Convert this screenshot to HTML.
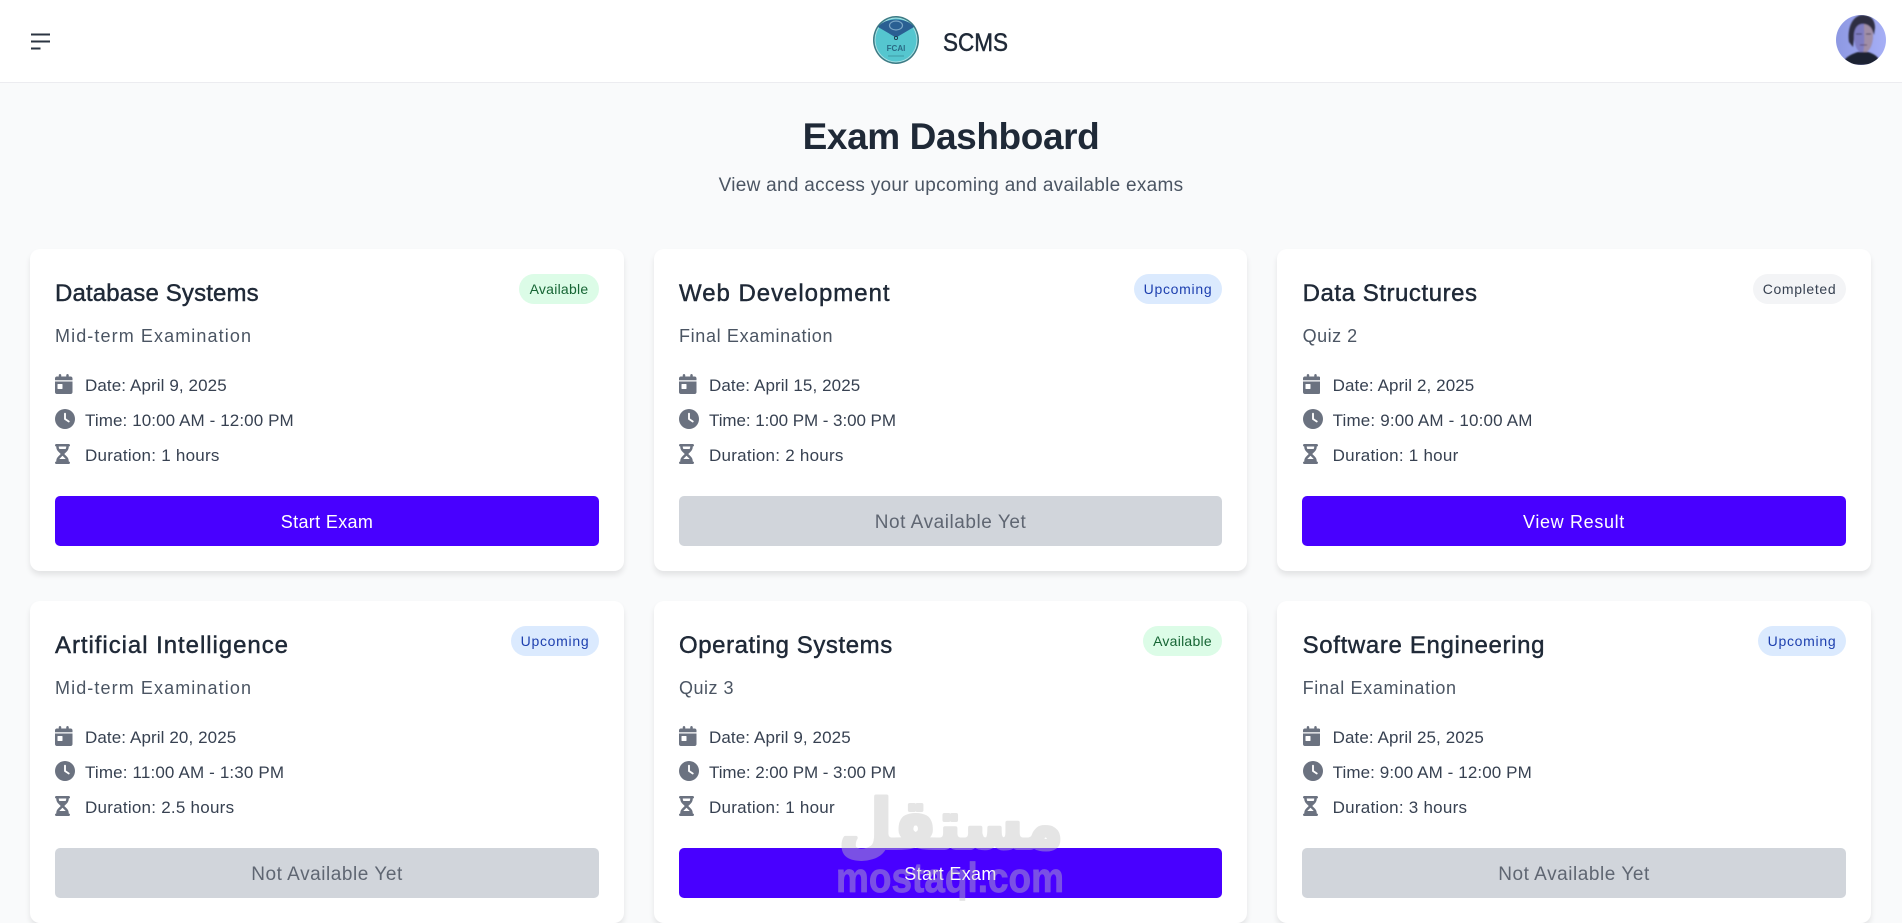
<!DOCTYPE html>
<html lang="en">
<head>
<meta charset="utf-8">
<title>Exam Dashboard</title>
<style>
*{box-sizing:border-box;margin:0;padding:0}
html,body{width:1902px;height:917px;overflow:hidden;background:#f9fafb;font-family:"Liberation Sans",sans-serif}
header{position:absolute;left:0;top:0;width:1902px;height:83px;background:#fff;border-bottom:1px solid #ececf0}
.menu{position:absolute;left:31px;top:32.500px}
.logo{position:absolute;left:873px;top:16px}
.brand{position:absolute;left:943px;top:26px;font-size:25px;line-height:34px;color:#1f2937;-webkit-text-stroke:.5px #1f2937;transform:scaleX(.9);transform-origin:0 50%}
.avatar{position:absolute;left:1836px;top:15px}
h1{position:absolute;left:0;width:1902px;top:113px;text-align:center;font-size:37px;line-height:48px;color:#1f2937;letter-spacing:-.4px}
.lead{position:absolute;left:0;width:1902px;top:174px;text-align:center;font-size:19px;line-height:24px;color:#4b5563;letter-spacing:.29px}
.card{position:absolute;width:594px;height:322px;background:#fff;border-radius:10px;box-shadow:0 4px 6px rgba(0,0,0,.09)}
.mid{width:593px}
.card h3{position:absolute;left:25px;top:30px;font-size:24px;line-height:30px;font-weight:400;color:#1f2937;-webkit-text-stroke:.45px #1f2937;white-space:nowrap}
.sub{position:absolute;left:25px;top:75px;font-size:18px;line-height:24px;color:#4b5563;white-space:nowrap}
.badge{position:absolute;right:25px;top:25px;height:30px;border-radius:15px;font-size:14px;line-height:31px;text-align:center;white-space:nowrap}
.av{background:#dcfce7;color:#166534;width:80px;letter-spacing:.25px}
.mid .av{width:79px}
.up{background:#dbeafe;color:#1e40af;width:88px;letter-spacing:.7px}
.co{background:#f3f4f6;color:#374151;width:93px;letter-spacing:.65px}
.row{position:absolute;left:25px;height:24px;font-size:17px;line-height:24px;color:#374151;white-space:nowrap;padding-left:30px;letter-spacing:.1px}
.row svg{position:absolute;left:0;top:0;height:20px;fill:#6b7280}
.r1{top:125px}.r2{top:160px}.r3{top:195px;letter-spacing:.25px}
.r2 svg{width:20px;top:0}.r1 svg{width:17.500px;top:0}.r3 svg{width:15px;top:-.500px}
.btn{position:absolute;left:25px;top:247px;width:544px;height:50px;border-radius:5px;font-size:18px;line-height:52px;text-align:center}
.mid .btn{width:543px}
.on{background:#4800ff;color:#fff;letter-spacing:.35px}
.off{background:#d1d5db;color:#5f6672;font-size:19px;letter-spacing:.55px;line-height:53px}
.c3 h3,.c3 .sub,.c3 .row{left:25.600px}
.wm{position:absolute;left:820px;top:780px;pointer-events:none}
</style>
</head>
<body>
<svg width="0" height="0" style="position:absolute">
  <symbol id="cal" viewBox="0 0 448 512"><path d="M128 0c17.700 0 32 14.300 32 32V64H288V32c0-17.700 14.300-32 32-32s32 14.300 32 32V64h48c26.500 0 48 21.500 48 48v48H0V112C0 85.500 21.500 64 48 64H96V32c0-17.700 14.300-32 32-32zM0 192H448V464c0 26.500-21.500 48-48 48H48c-26.500 0-48-21.500-48-48V192zm80 64c-8.800 0-16 7.200-16 16v96c0 8.800 7.200 16 16 16h96c8.800 0 16-7.200 16-16V272c0-8.800-7.200-16-16-16H80z"/></symbol>
  <symbol id="clk" viewBox="0 0 512 512"><path d="M256 0a256 256 0 1 1 0 512A256 256 0 1 1 256 0zM232 120V256c0 8 4 15.500 10.700 20l96 64c11 7.400 25.900 4.400 33.300-6.700s4.400-25.900-6.700-33.300L280 243.200V120c0-13.300-10.700-24-24-24s-24 10.700-24 24z"/></symbol>
  <symbol id="hrg" viewBox="0 0 384 512"><path d="M32 0C14.300 0 0 14.300 0 32S14.300 64 32 64V75c0 42.400 16.900 83.100 46.900 113.100L146.700 256 78.900 323.900C48.900 353.900 32 394.600 32 437v11c-17.700 0-32 14.300-32 32s14.300 32 32 32H64 320h32c17.700 0 32-14.300 32-32s-14.300-32-32-32V437c0-42.400-16.900-83.100-46.900-113.100L237.300 256l67.900-67.900c30-30 46.900-70.700 46.900-113.100V64c17.700 0 32-14.300 32-32s-14.300-32-32-32H320 64 32zM96 75V64H288V75c0 19-5.600 37.400-16 53H112c-10.300-15.600-16-34-16-53zm16 309c3.500-5.300 7.600-10.300 12.100-14.900L192 301.300l67.900 67.900c4.600 4.600 8.600 9.600 12.100 14.900H112z"/></symbol>
</svg>
<header>
  <svg class="menu" width="20" height="18" viewBox="0 0 20 18"><path d="M0 1.500H19M0 8.500H19M0 15.500H9.500" stroke="#2b3442" stroke-width="2" fill="none"/></svg>
  <svg class="logo" width="46" height="48" viewBox="0 0 46 48">
    <ellipse cx="23" cy="24" rx="23" ry="24" fill="#3c7a84"/>
    <ellipse cx="23" cy="24" rx="21.500" ry="22.500" fill="#a8e0e4"/>
    <ellipse cx="23" cy="24" rx="20.500" ry="21.500" fill="#55c6cf"/>
    <path d="M5 11C12 1 34 1 41 11L24 21H22Z" fill="#2a5f92"/>
    <ellipse cx="23" cy="9.500" rx="6.500" ry="4.500" fill="none" stroke="#7aa6c6" stroke-width="1.200"/>
    <circle cx="23" cy="22" r="1.600" fill="none" stroke="#1d3d50" stroke-width=".9"/>
    <text x="23" y="35" font-family="Liberation Sans" font-size="8" font-weight="700" text-anchor="middle" fill="#2a6b85">FCAI</text>
    <path d="M15 40H31" stroke="#3f9aa6" stroke-width="1"/>
  </svg>
  <div class="brand">SCMS</div>
  <svg class="avatar" width="50" height="50" viewBox="0 0 50 50">
    <defs>
      <clipPath id="c"><circle cx="25" cy="25" r="25"/></clipPath>
      <linearGradient id="bg" x1="0" x2="1"><stop offset="0" stop-color="#8d98e2"/><stop offset="1" stop-color="#a6aff6"/></linearGradient>
      <filter id="b"><feGaussianBlur stdDeviation=".9"/></filter>
    </defs>
    <g clip-path="url(#c)">
      <rect width="50" height="50" fill="url(#bg)"/>
      <g filter="url(#b)">
        <path d="M13 27C11 12 17 0 27 0C35 0 39 5 39 13L38 20C36 12 30 9 24 10C20 12 18 17 18 24L17 32Z" fill="#2e2d42"/>
        <path d="M18 21C18 12 23 8 28 9C34 10 37 14 37 20C37 30 33 38 27 38C22 38 18 31 18 21Z" fill="#7f7dc2"/>
        <path d="M28 9C34 10 37 14 37 20C37 30 33 38 27 38C29 30 28 18 28 9Z" fill="#a08ea6"/>
        <path d="M20 19H26M30 19H35" stroke="#3a3858" stroke-width="1.100"/>
        <path d="M24 30H31" stroke="#5c4a6c" stroke-width="1"/>
        <path d="M6 50C8 42 16 39 22 37L32 37C38 39 44 42 45 50Z" fill="#1c2033"/>
      </g>
    </g>
  </svg>
</header>

<h1>Exam Dashboard</h1>
<div class="lead">View and access your upcoming and available exams</div>

<section class="card" style="left:30px;top:249px">
  <h3 style="letter-spacing:.15px">Database Systems</h3><span class="badge av">Available</span>
  <div class="sub" style="letter-spacing:1.100px">Mid-term Examination</div>
  <div class="row r1"><svg><use href="#cal"/></svg>Date: April 9, 2025</div>
  <div class="row r2"><svg><use href="#clk"/></svg>Time: 10:00 AM - 12:00 PM</div>
  <div class="row r3"><svg><use href="#hrg"/></svg>Duration: 1 hours</div>
  <div class="btn on">Start Exam</div>
</section>

<section class="card mid" style="left:654px;top:249px">
  <h3 style="letter-spacing:.97px">Web Development</h3><span class="badge up">Upcoming</span>
  <div class="sub" style="letter-spacing:.65px">Final Examination</div>
  <div class="row r1"><svg><use href="#cal"/></svg>Date: April 15, 2025</div>
  <div class="row r2" style="letter-spacing:-.06px"><svg><use href="#clk"/></svg>Time: 1:00 PM - 3:00 PM</div>
  <div class="row r3"><svg><use href="#hrg"/></svg>Duration: 2 hours</div>
  <div class="btn off">Not Available Yet</div>
</section>

<section class="card c3" style="left:1277px;top:249px">
  <h3 style="letter-spacing:.55px">Data Structures</h3><span class="badge co">Completed</span>
  <div class="sub" style="letter-spacing:.5px">Quiz 2</div>
  <div class="row r1"><svg><use href="#cal"/></svg>Date: April 2, 2025</div>
  <div class="row r2" style="letter-spacing:.17px"><svg><use href="#clk"/></svg>Time: 9:00 AM - 10:00 AM</div>
  <div class="row r3"><svg><use href="#hrg"/></svg>Duration: 1 hour</div>
  <div class="btn on" style="letter-spacing:.66px">View Result</div>
</section>

<section class="card" style="left:30px;top:601px">
  <h3 style="letter-spacing:.95px">Artificial Intelligence</h3><span class="badge up">Upcoming</span>
  <div class="sub" style="letter-spacing:1.100px">Mid-term Examination</div>
  <div class="row r1"><svg><use href="#cal"/></svg>Date: April 20, 2025</div>
  <div class="row r2" style="letter-spacing:.15px"><svg><use href="#clk"/></svg>Time: 11:00 AM - 1:30 PM</div>
  <div class="row r3"><svg><use href="#hrg"/></svg>Duration: 2.5 hours</div>
  <div class="btn off">Not Available Yet</div>
</section>

<section class="card mid" style="left:654px;top:601px">
  <h3 style="letter-spacing:.57px">Operating Systems</h3><span class="badge av">Available</span>
  <div class="sub" style="letter-spacing:.5px">Quiz 3</div>
  <div class="row r1"><svg><use href="#cal"/></svg>Date: April 9, 2025</div>
  <div class="row r2" style="letter-spacing:-.06px"><svg><use href="#clk"/></svg>Time: 2:00 PM - 3:00 PM</div>
  <div class="row r3"><svg><use href="#hrg"/></svg>Duration: 1 hour</div>
  <div class="btn on">Start Exam</div>
</section>

<section class="card c3" style="left:1277px;top:601px">
  <h3 style="letter-spacing:.65px">Software Engineering</h3><span class="badge up">Upcoming</span>
  <div class="sub" style="letter-spacing:.65px">Final Examination</div>
  <div class="row r1"><svg><use href="#cal"/></svg>Date: April 25, 2025</div>
  <div class="row r2"><svg><use href="#clk"/></svg>Time: 9:00 AM - 12:00 PM</div>
  <div class="row r3"><svg><use href="#hrg"/></svg>Duration: 3 hours</div>
  <div class="btn off">Not Available Yet</div>
</section>

<svg class="wm" width="260" height="125" viewBox="0 0 260 125">
  <g opacity=".41" fill="#c2c2c2" stroke="#c2c2c2" stroke-linejoin="round">
    <text x="131" y="68" text-anchor="middle" textLength="224" lengthAdjust="spacingAndGlyphs" font-family="DejaVu Sans" font-size="68" font-weight="700" stroke-width="4" direction="rtl">مستقل</text>
    <text x="130" y="112" text-anchor="middle" textLength="228" lengthAdjust="spacingAndGlyphs" font-family="Liberation Sans" font-size="42" font-weight="700" stroke-width=".8">mostaql.com</text>
  </g>
</svg>
</body>
</html>
